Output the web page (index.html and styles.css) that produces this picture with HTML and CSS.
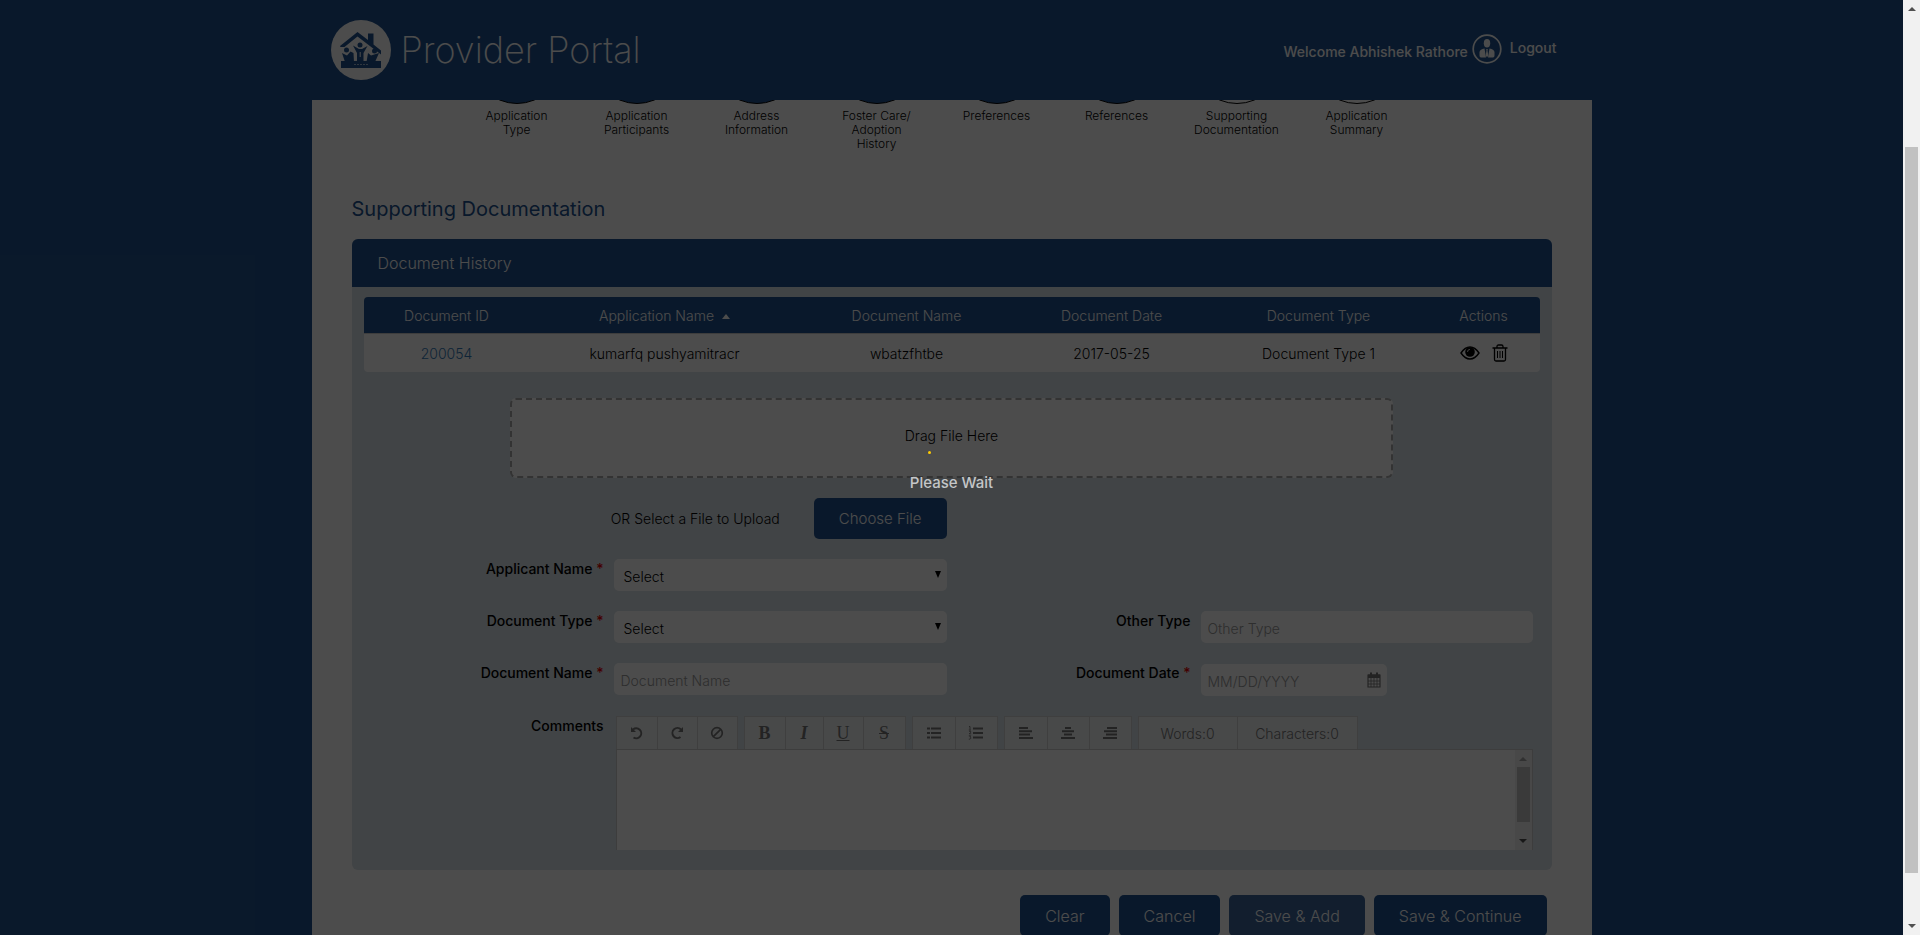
FILE: index.html
```html
<!DOCTYPE html>
<html lang="en">
<head>
<meta charset="utf-8">
<title>Provider Portal</title>
<link rel="stylesheet" href="styles.css">
</head>
<body>
<div class="viewport">
  <header class="site-header">
    <div class="container header-inner">
      <div class="brand">
        <svg class="brand-logo" viewBox="0 0 60 60" aria-hidden="true">
          <circle cx="30" cy="30" r="30" fill="#fff"/>
          <g fill="#21538f">
            <path d="M9 26 L26.500 12 L37 20 V13.500 H42.500 V24.500 L50 30.500 V34.500 L26.500 16.500 L13.500 27 H9.500Z"/>
            <rect x="10" y="41" width="40" height="7"/>
            <circle cx="29" cy="25" r="2.500"/>
            <circle cx="15.500" cy="30" r="2.500"/>
            <circle cx="43.500" cy="31" r="2.500"/>
            <path d="M22 25.500 L28 29 H31 L36.500 26 L32.500 33 V42 H26 V33Z"/>
            <path d="M11 33 L16 35.500 L19.500 31.500 L22.500 33 L23 42 H14Z"/>
            <path d="M37 33 L40 35.500 L48 33 L44 42 H35.500Z"/>
          </g>
          <path d="M23 44.500H37" stroke="#9fb5cf" stroke-width="1" stroke-dasharray="2 1"/>
          <path d="M29.200 32v5" stroke="#fff" stroke-width="1"/>
        </svg>
        <h1 class="brand-name">Provider Portal</h1>
      </div>
      <div class="account">
        <span class="welcome">Welcome Abhishek Rathore</span>
        <svg class="avatar" viewBox="0 0 30 30" aria-hidden="true">
          <circle cx="15" cy="15" r="13.800" fill="none" stroke="#fff" stroke-width="1.700"/>
          <ellipse cx="15" cy="9.300" rx="3.200" ry="4.200" fill="#fff"/>
          <path d="M12.500 14.500 L14 23.500 H9 Q7.500 23.500 7.500 21.500 V18 Q8 15 12.500 14.500Z M17.500 14.500 Q22 15 22.500 18 V21.500 Q22.500 23.500 21 23.500 H16Z" fill="#fff"/>
          <path d="M14.200 15h1.600l-.3 1.500.8 5-1.300 1.800-1.300-1.800.8-5z" fill="#fff"/>
        </svg>
        <a class="logout" href="#">Logout</a>
      </div>
    </div>
  </header>

  <main class="container page">
    <ol class="steps">
      <li class="step"><span class="step-circle done"></span>Application<br>Type</li>
      <li class="step"><span class="step-circle done"></span>Application<br>Participants</li>
      <li class="step"><span class="step-circle done"></span>Address<br>Information</li>
      <li class="step"><span class="step-circle done"></span>Foster Care/<br>Adoption<br>History</li>
      <li class="step"><span class="step-circle done"></span>Preferences</li>
      <li class="step"><span class="step-circle done"></span>References</li>
      <li class="step"><span class="step-circle"></span>Supporting<br>Documentation</li>
      <li class="step"><span class="step-circle"></span>Application<br>Summary</li>
    </ol>

    <h2 class="page-title">Supporting Documentation</h2>

    <section class="panel">
      <h3 class="panel-title">Document History</h3>
      <div class="table-wrap">
        <table class="doc-table">
          <colgroup><col class="c-id"><col class="c-app"><col class="c-name"><col class="c-date"><col class="c-type"><col class="c-act"></colgroup>
          <thead>
            <tr><th>Document ID</th><th>Application Name<span class="sort"></span></th><th>Document Name</th><th>Document Date</th><th>Document Type</th><th>Actions</th></tr>
          </thead>
          <tbody>
            <tr>
              <td><a class="doc-link" href="#">200054</a></td><td>kumarfq pushyamitracr</td><td>wbatzfhtbe</td><td>2017-05-25</td><td>Document Type 1</td>
              <td>
                <div class="actions">
                  <button class="icon-btn" type="button" aria-label="View">
                    <svg width="20" height="16" viewBox="0 0 20 16"><path d="M1 8 Q5 2 10 2 T19 8 Q15 14 10 14 T1 8Z" fill="none" stroke="#000" stroke-width="1.400"/><circle cx="10" cy="7" r="4.800"/><path d="M7.500 7a2.500 2.500 0 0 1 2.500-2.600" fill="none" stroke="#fff" stroke-width=".8"/></svg>
                  </button>
                  <button class="icon-btn" type="button" aria-label="Delete">
                    <svg width="16" height="18" viewBox="0 0 16 18" fill="none" stroke="#000" stroke-width="1.300"><path d="M.5 4H15.500M5 4V2.500Q5 1 6.500 1H9.500Q11 1 11 2.500V4M2.500 4V15.500Q2.500 17 4 17H12Q13.500 17 13.500 15.500V4"/><path d="M5.500 7V14M8 7V14M10.500 7V14" stroke-width="1"/></svg>
                  </button>
                </div>
              </td>
            </tr>
          </tbody>
        </table>
      </div>

      <div class="dropzone">Drag File Here</div>

      <form class="form">
        <div class="upload">
          <span class="upload-hint">OR Select a File to Upload</span>
          <button class="btn choose" type="button">Choose File</button>
        </div>

        <label class="label row-start" for="applicant">Applicant Name <span class="req">*</span></label>
        <div class="select-box"><select class="field" id="applicant"><option>Select</option></select></div>

        <label class="label row-start" for="doctype">Document Type <span class="req">*</span></label>
        <div class="select-box"><select class="field" id="doctype"><option>Select</option></select></div>
        <label class="label" for="other">Other Type</label>
        <input class="field" id="other" type="text" placeholder="Other Type">

        <label class="label" for="docname">Document Name <span class="req">*</span></label>
        <input class="field" id="docname" type="text" placeholder="Document Name">
        <label class="label" for="docdate">Document Date <span class="req">*</span></label>
        <div class="date-box">
          <input class="field" id="docdate" type="text" placeholder="MM/DD/YYYY">
          <svg class="calendar" viewBox="0 0 14 16" aria-hidden="true"><path d="M1 3h12v12H1z" fill="none" stroke="#777" stroke-width="1.200"/><path d="M1 2.500h12v3.500H1z" fill="#777"/><path d="M4 .5v3.500M10 .5v3.500" stroke="#777" stroke-width="2"/><path d="M1 9h12M1 12h12M4 6v9M7 6v9M10 6v9" stroke="#777" stroke-width=".8"/></svg>
        </div>

        <label class="label" for="comments">Comments</label>
        <div class="editor">
          <div class="toolbar">
            <div class="group">
              <button class="tool" type="button" aria-label="Undo"><svg width="14" height="14" viewBox="0 0 14 14" fill="none" stroke="#777" stroke-width="2"><path d="M3 3.500A5 5 0 1 1 3.500 11.500"/><path d="M1 1v5h5z" fill="#777" stroke="none"/></svg></button>
              <button class="tool" type="button" aria-label="Redo"><svg width="14" height="14" viewBox="0 0 14 14" fill="none" stroke="#777" stroke-width="2"><path d="M11 3.500A5 5 0 1 0 10.500 11"/><path d="M13 1v5H8z" fill="#777" stroke="none"/></svg></button>
              <button class="tool" type="button" aria-label="Clear formatting"><svg width="14" height="14" viewBox="0 0 14 14" fill="none" stroke="#777" stroke-width="1.700"><circle cx="7" cy="7" r="5.300"/><path d="M3.300 10.700L10.700 3.300"/></svg></button>
            </div>
            <div class="group">
              <button class="tool serif bold" type="button">B</button>
              <button class="tool serif italic" type="button">I</button>
              <button class="tool serif underline" type="button">U</button>
              <button class="tool serif strike" type="button">S</button>
            </div>
            <div class="group">
              <button class="tool wide" type="button" aria-label="Bulleted list"><svg width="16" height="14" viewBox="0 0 16 14" stroke="#777" stroke-width="2"><path d="M1 2.500h3M1 7h3M1 11.500h3M5 2.500H15M5 7H15M5 11.500H15"/></svg></button>
              <button class="tool wide" type="button" aria-label="Numbered list"><svg width="16" height="14" viewBox="0 0 16 14" stroke="#777" stroke-width="2" fill="none"><path d="M5 2.500H15M5 7H15M5 11.500H15"/><path d="M1 .5h1v3M.8 4h2.200M1 5.300h1.700v1l-1.500 1.500h2M.8 9.800h2l-1 1.200q1.200 0 1 1.200t-2 1" stroke-width=".9"/></svg></button>
            </div>
            <div class="group">
              <button class="tool wide" type="button" aria-label="Align left"><svg width="16" height="14" viewBox="0 0 16 14" stroke="#777" stroke-width="2"><path d="M1 2h9M1 5.300h13M1 8.600h11M1 12h14"/></svg></button>
              <button class="tool wide" type="button" aria-label="Align center"><svg width="16" height="14" viewBox="0 0 16 14" stroke="#777" stroke-width="2"><path d="M5 2h6M2 5.300h12M4 8.600h8M1 12h14"/></svg></button>
              <button class="tool wide" type="button" aria-label="Align right"><svg width="16" height="14" viewBox="0 0 16 14" stroke="#777" stroke-width="2"><path d="M5 2h10M2 5.300h13M4 8.600h11M1 12h14"/></svg></button>
            </div>
            <div class="group">
              <span class="tool count words">Words:0</span>
              <span class="tool count chars">Characters:0</span>
            </div>
          </div>
          <div class="editor-body">
            <textarea class="editor-text" id="comments"></textarea>
            <div class="scroll inner"><span class="arrow up"></span><span class="thumb"></span><span class="arrow down"></span></div>
          </div>
        </div>
      </form>
    </section>

    <div class="footer-actions">
      <button class="btn" type="button">Clear</button>
      <button class="btn" type="button">Cancel</button>
      <button class="btn" type="button" disabled>Save &amp; Add</button>
      <button class="btn" type="button">Save &amp; Continue</button>
    </div>
  </main>

  <div class="overlay" role="status">
    <div class="loader"><span class="spark"></span><span class="wait">Please Wait</span></div>
  </div>
</div>
<div class="scroll outer" aria-hidden="true"><span class="arrow up"></span><span class="thumb"></span><span class="arrow down"></span></div>
</body>
</html>
```
FILE: styles.css
```css
* { box-sizing: border-box; }
body {
  margin: 0;
  height: 100vh;
  display: flex;
  overflow: hidden;
  background: #21538f;
  font-family: "Century Gothic", Inter, "Liberation Sans", sans-serif;
  font-size: 14px;
  font-weight: 300;
  color: #000;
}
button, input, select, textarea { font: inherit; color: inherit; }
.viewport {
  flex: 1;
  display: flex;
  flex-direction: column;
  position: relative;
  overflow: hidden;
}
.container { width: 100%; max-width: 1280px; margin: 0 auto; }

.site-header { flex: none; background: #21538f; color: #fff; }
.header-inner {
  height: 100px;
  display: flex;
  align-items: center;
  justify-content: space-between;
  padding: 0 35px 0 19px;
}
.brand { display: flex; align-items: center; gap: 10px; }
.brand-logo { width: 60px; height: 60px; }
.brand-name { margin: 0; font-size: 36px; font-weight: 200; }
.account { display: flex; align-items: center; gap: 4px; font-weight: 500; padding-bottom: 3px; }
.avatar { width: 30px; height: 30px; }
.welcome { padding-top: 5px; }
.logout { color: inherit; text-decoration: none; margin-left: 4px; padding-bottom: 3px; }

.page {
  flex: 1;
  min-height: 0;
  overflow: hidden;
  background: #fff;
  padding: 0 40px;
}
.steps {
  display: flex;
  justify-content: center;
  list-style: none;
  margin: -86px 0 0;
  padding: 0 30px 0 0;
  min-height: 181px;
}
.step { width: 120px; text-align: center; font-size: 12px; line-height: 14px; }
.step-circle {
  display: block;
  width: 90px;
  height: 90px;
  margin: 0 auto 5px;
  border: 1px solid #000;
  border-radius: 50%;
}
.step-circle.done { background: #21538f; }

.page-title { margin: 0 0 16px; font-size: 20px; line-height: 28px; font-weight: 400; color: #21538f; }
.panel { background: #d9e3e9; border-radius: 6px; padding-bottom: 20px; }
.panel-title {
  margin: 0;
  padding: 0 26px;
  font-size: 16px;
  line-height: 48px;
  font-weight: 300;
  color: #fff;
  background: #21538f;
  border-radius: 6px 6px 0 0;
}
.table-wrap { padding: 10px 12px 0; }
.doc-table { width: 100%; table-layout: fixed; border-collapse: separate; border-spacing: 0; text-align: center; }
.c-id { width: 166px; } .c-app { width: 270px; } .c-name { width: 214px; } .c-date { width: 196px; } .c-type { width: 218px; } .c-act { width: 112px; }
.doc-table th { height: 36px; padding: 0; background: #21538f; color: #fff; font-weight: 300; }
.doc-table th:first-child { border-radius: 4px 0 0; }
.doc-table th:last-child { border-radius: 0 4px 0 0; }
.doc-table td { height: 39px; padding: 0; background: #fff; border-top: 1px solid #ccc; }
.doc-table td:first-child { border-radius: 0 0 0 4px; }
.doc-table td:last-child { border-radius: 0 0 4px; }
.sort {
  display: inline-block;
  margin-left: 8px;
  border: 4px solid transparent;
  border-top: 0;
  border-bottom: 5px solid #fff;
  vertical-align: 2px;
}
.doc-link { color: #337ab7; text-decoration: none; }
.actions { display: flex; justify-content: center; align-items: center; gap: 12px; }
.icon-btn { display: flex; padding: 0; border: 0; background: none; }

.dropzone {
  width: 883px;
  max-width: 100%;
  height: 80px;
  margin: 26px auto 20px;
  border: 2px dashed #aaa;
  border-radius: 6px;
  background: #fff;
  text-align: center;
  line-height: 72px;
}
.form {
  display: grid;
  grid-template-columns: 252fr 333fr 234fr 332fr;
  gap: 20px 10px;
  padding-right: 19px;
}
.upload { grid-column: 1 / 3; display: flex; justify-content: flex-end; align-items: center; gap: 34px; grid-row: 1; }
.btn {
  height: 41px;
  padding: 0 25px;
  border: 0;
  border-radius: 5px;
  background: #21538f;
  color: #fff;
  font-size: 15px;
}
.btn:disabled { background: #3c669b; }
.label { text-align: right; font-weight: 500; line-height: 20px; }
.row-start { grid-column: 1; }
.req { color: #e00000; }
.field {
  width: 100%;
  height: 32px;
  padding: 2px 7px 0;
  border: 0;
  border-radius: 5px;
  background: #fff;
  font-size: 14px;
}
.field::placeholder { color: #999; opacity: 1; }
.select-box { position: relative; }
.select-box .field { display: block; appearance: none; padding-left: 10px; }
.select-box::after {
  content: "";
  position: absolute;
  right: 6px;
  top: 12px;
  border: 3px solid transparent;
  border-top: 7px solid #000;
  border-bottom: 0;
}
.date-box { position: relative; width: 186px; padding-top: 1px; }
.calendar { position: absolute; right: 6px; top: 9px; width: 14px; height: 16px; }
.editor { grid-column: 2 / 5; margin-left: 2px; }
.toolbar { display: flex; gap: 6px; }
.group { display: flex; border: 1px solid #d4d4d4; border-bottom: 0; background: #f2f4f5; }
.tool {
  width: 40px;
  height: 32px;
  padding: 0;
  display: flex;
  align-items: center;
  justify-content: center;
  border: 0;
  border-left: 1px solid #d4d4d4;
  background: #f2f4f5;
  color: #777;
}
.tool:first-child { border-left: 0; }
.serif { font-family: "Liberation Serif", serif; font-size: 18px; font-weight: 400; }
.bold { font-weight: 700; }
.italic { font-style: italic; font-weight: 700; width: 38px; }
.underline { text-decoration: underline; }
.strike { text-decoration: line-through; width: 42px; }
.wide { width: 42px; }
.count.words { width: 98px; }
.count.chars { width: 120px; }
.editor-body { display: flex; height: 101px; background: #fff; border: 1px solid #ccc; border-bottom: 0; }
.editor-text { flex: 1; border: 0; resize: none; background: #fff; overflow: hidden; }

.scroll { flex: none; width: 17px; background: #f1f1f1; display: flex; flex-direction: column; align-items: center; }
.arrow { width: 0; height: 0; border: 4px solid transparent; }
.arrow.up { border-top: 0; border-bottom: 4px solid #505050; margin-top: 7px; }
.arrow.down { border-bottom: 0; border-top: 4px solid #505050; margin: auto 0 7px; }
.thumb { width: 13px; background: #c1c1c1; }
.outer .thumb { margin-top: 136px; height: 726px; }
.inner .thumb { margin-top: 6px; height: 55px; }
.inner .arrow.up { border-bottom-color: #a3a3a3; }

.footer-actions { display: flex; justify-content: flex-end; gap: 9px; padding: 25px 5px 0 0; }
.footer-actions .btn { font-size: 16px; }

.overlay {
  position: absolute;
  inset: 0;
  background: rgba(0, 0, 0, .7);
  display: flex;
  align-items: center;
  justify-content: center;
  padding-top: 8px;
}
.loader { display: flex; flex-direction: column; align-items: center; gap: 20px; }
.spark { width: 3px; height: 3px; border-radius: 50%; background: #fc0; margin-right: 44px; }
.wait { color: #c4c6c8; font-size: 15px; line-height: 18px; font-weight: 500; }
```
